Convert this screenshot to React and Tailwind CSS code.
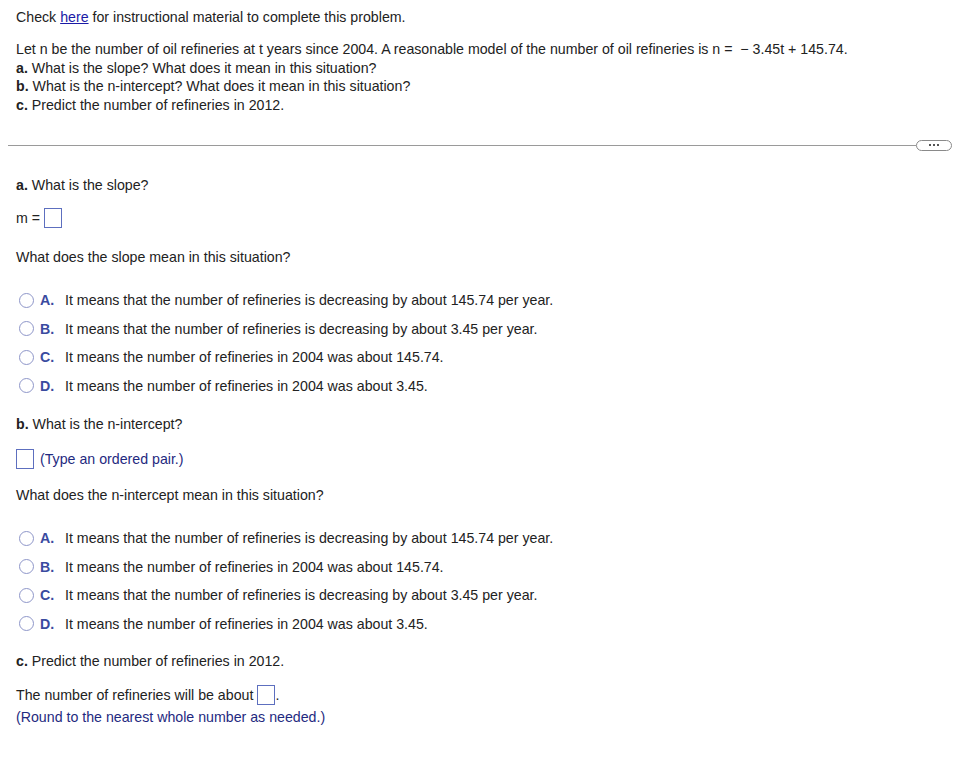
import React from 'react'

/*
Homework problem page
Oil refineries linear model, parts a, b and c
*/

const Box = ({ className = "" }) => (
    <span className={"inline-block w-[18px] h-[20px] border border-[#5d6fbf] bg-white " + className} />
)

const Choice = ({ letter, text }) => (
    <div className="flex items-center h-[28.5px]">
        <span className="ml-[3px] w-[15px] h-[15px] rounded-full border-[1.5px] border-[#8e96c9]" />
        <span className="ml-[6px] w-[25px] font-bold text-[#3a4b9f]">{letter}</span>
        <span>{text}</span>
    </div>
)

const slopeChoices = [
    ["A.", "It means that the number of refineries is decreasing by about 145.74 per year."],
    ["B.", "It means that the number of refineries is decreasing by about 3.45 per year."],
    ["C.", "It means the number of refineries in 2004 was about 145.74."],
    ["D.", "It means the number of refineries in 2004 was about 3.45."],
]

const interceptChoices = [
    ["A.", "It means that the number of refineries is decreasing by about 145.74 per year."],
    ["B.", "It means the number of refineries in 2004 was about 145.74."],
    ["C.", "It means that the number of refineries is decreasing by about 3.45 per year."],
    ["D.", "It means the number of refineries in 2004 was about 3.45."],
]

const App = () => {
    return (
        <div className="min-h-screen bg-white font-['Liberation_Sans',Arial,sans-serif] text-[14.2px] text-[#222] leading-[18px]">
            <div className="px-4 pt-2">
                <p>
                    Check <a href="#" className="text-[#1a1aa6] underline">here</a> for instructional material to complete this problem.
                </p>
                <div className="mt-[14px] leading-[18.5px]">
                    <p>Let n be the number of oil refineries at t years since 2004. A reasonable model of the number of oil refineries is n = &nbsp;&minus; 3.45t + 145.74.</p>
                    <p><b>a.</b> What is the slope? What does it mean in this situation?</p>
                    <p><b>b.</b> What is the n-intercept? What does it mean in this situation?</p>
                    <p><b>c.</b> Predict the number of refineries in 2012.</p>
                </div>
            </div>

            <div className="mt-[25px] flex items-center h-[12px] pl-2 pr-[2px]">
                <div className="flex-1 h-px bg-[#9a9a9a]" />
                <button className="w-[36px] h-[11px] rounded-full border border-[#8a8a8a] bg-white flex items-center justify-center gap-[2px]">
                    <span className="w-[2px] h-[2px] bg-[#555]" />
                    <span className="w-[2px] h-[2px] bg-[#555]" />
                    <span className="w-[2px] h-[2px] bg-[#555]" />
                </button>
            </div>

            <div className="px-4">
                <p className="mt-[25px]"><b>a.</b> What is the slope?</p>
                <div className="mt-[14px] flex items-center h-[20px]">
                    <span>m =</span>
                    <Box className="ml-[4px]" />
                </div>
                <p className="mt-[20px]">What does the slope mean in this situation?</p>
                <div className="mt-[20px]">
                    {slopeChoices.map(([l, t]) => <Choice key={l} letter={l} text={t} />)}
                </div>

                <p className="mt-[15px]"><b>b.</b> What is the n-intercept?</p>
                <div className="mt-[16px] flex items-center h-[20px]">
                    <Box />
                    <span className="ml-[6px] text-[#1f2a80]">(Type an ordered pair.)</span>
                </div>
                <p className="mt-[17px]">What does the n-intercept mean in this situation?</p>
                <div className="mt-[20px]">
                    {interceptChoices.map(([l, t]) => <Choice key={l} letter={l} text={t} />)}
                </div>

                <p className="mt-[14px]"><b>c.</b> Predict the number of refineries in 2012.</p>
                <div className="mt-[15px] flex items-center h-[20px]">
                    <span>The number of refineries will be about</span>
                    <Box className="ml-[4px]" />
                    <span>.</span>
                </div>
                <p className="mt-[3px] text-[#1f2a80]">(Round to the nearest whole number as needed.)</p>
            </div>
        </div>
    )
}

export default App
